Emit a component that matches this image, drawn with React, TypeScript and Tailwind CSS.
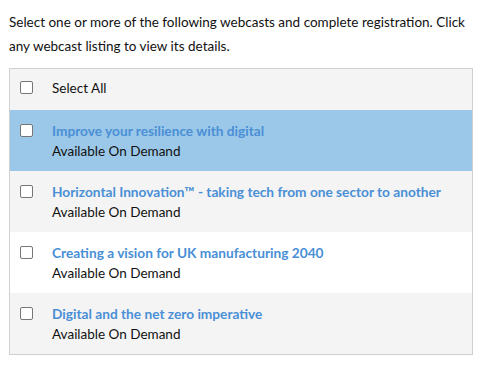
const webcasts = [
  { title: 'Improve your resilience with digital', selected: true },
  { title: 'Horizontal Innovation™ - taking tech from one sector to another' },
  { title: 'Creating a vision for UK manufacturing 2040' },
  { title: 'Digital and the net zero imperative' },
]

function Box({ top = 'mt-[4px]' }: { top?: string }) {
  return (
    <span
      className={`${top} block h-[13px] w-[13px] shrink-0 rounded-[2px] border border-[#767676] bg-white`}
    />
  )
}

export default function App() {
  const rowBg = (i: number, selected?: boolean) =>
    selected ? 'bg-[#9bc8e8]' : i % 2 === 1 ? 'bg-[#f4f4f4]' : 'bg-white'

  return (
    <div
      className="min-h-[375px] w-[482px] bg-white text-[13.5px] text-[#111]"
      style={{ fontFamily: 'Lato, "Open Sans", sans-serif' }}
    >
      <div className="px-[9px] pt-[10px]">
        <p className="leading-[24px]">
          Select one or more of the following webcasts and complete registration. Click
          any webcast listing to view its details.
        </p>
        <div className="mt-[10px] w-[464px] border border-[#d0d0d0]">
          <label className="flex h-[41px] items-start gap-[19px] bg-[#f4f4f4] pl-[10px] pt-[9px] leading-[21px]">
            <Box top="mt-[3px]" />
            <span>Select All</span>
          </label>
          {webcasts.map((w, i) => (
            <div
              key={w.title}
              className={`flex h-[61px] items-start gap-[19px] pl-[10px] pt-[10px] leading-[21px] ${rowBg(i, w.selected)}`}
            >
              <Box />
              <div>
                <div className="text-[13.7px] font-bold text-[#4a8fd6]">{w.title}</div>
                <div>Available On Demand</div>
              </div>
            </div>
          ))}
        </div>
      </div>
    </div>
  )
}
